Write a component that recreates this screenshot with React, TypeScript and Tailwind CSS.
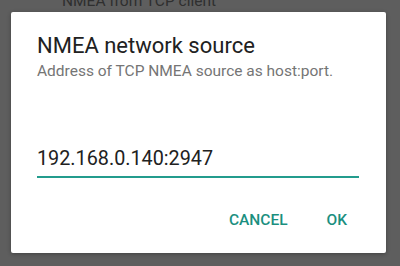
import React from "react";

export default function App() {
  return (
    <div className="relative w-[400px] h-[266px] overflow-hidden bg-[#5e5e5e]" style={{ fontFamily: "Roboto, 'Noto Sans', sans-serif" }}>
      <div className="absolute left-[62px] top-[-7px] text-[15.5px] leading-[16px] text-[#2f2f2f]">NMEA from TCP client</div>
      <div className="absolute left-[11px] top-[12px] w-[375px] h-[241px] bg-white rounded-[2px] shadow-[0_1px_4px_rgba(0,0,0,0.3)] flex flex-col px-[26px]">
        <div className="pt-[22px] text-[22px] leading-[24px] font-normal text-[#212121]">NMEA network source</div>
        <div className="mt-[3px] text-[15.5px] leading-[20px] text-[#757575]">Address of TCP NMEA source as host:port.</div>
        <div className="mt-[66px] w-[322px] border-b-2 border-[#239c8d] pb-[5px] text-[19.8px] leading-[24px] text-[#212121]">192.168.0.140:2947</div>
        <div className="mt-[34px] flex justify-end gap-[39px] pr-[13px] text-[15.5px] leading-[16px] font-medium text-[#1b8f7f]">
          <span>CANCEL</span>
          <span>OK</span>
        </div>
      </div>
    </div>
  );
}
